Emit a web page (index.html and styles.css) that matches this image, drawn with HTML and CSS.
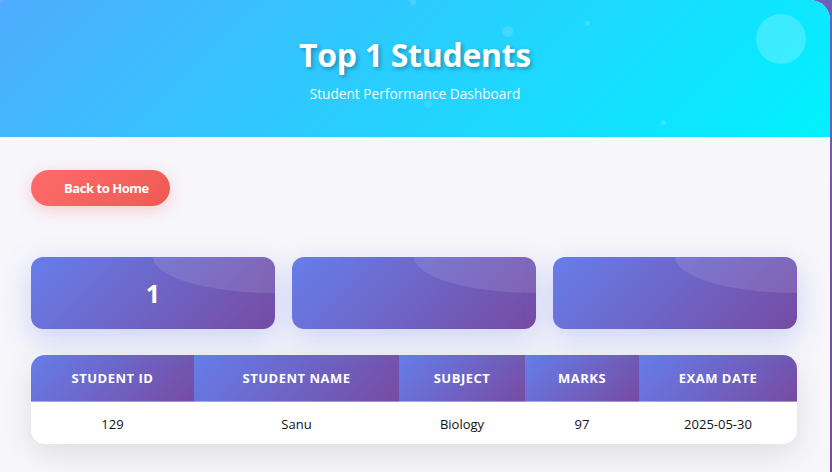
FILE: index.html
```html
<!DOCTYPE html>
<html lang="en">
<head>
<meta charset="UTF-8">
<title>Top 1 Students</title>
<link rel="stylesheet" href="styles.css">
</head>
<body>
<div class="container">
  <header class="header">
    <span class="bubble bubble-big"></span>
    <span class="bubble dot d1"></span>
    <span class="bubble dot d2"></span>
    <span class="bubble dot d3"></span>
    <span class="bubble dot d4"></span>
    <span class="bubble dot d5"></span>
    <h1 class="title">Top 1 Students</h1>
    <p class="subtitle">Student Performance Dashboard</p>
  </header>
  <main class="content">
    <div class="actions">
      <a class="btn-back" href="#">Back to Home</a>
    </div>
    <div class="stats">
      <div class="stat-card"><span class="stat-value">1</span></div>
      <div class="stat-card"></div>
      <div class="stat-card"></div>
    </div>
    <div class="table-wrap">
      <table class="students">
        <thead>
          <tr>
            <th class="c1">Student ID</th>
            <th class="c2">Student Name</th>
            <th class="c3">Subject</th>
            <th class="c4">Marks</th>
            <th class="c5">Exam Date</th>
          </tr>
        </thead>
        <tbody>
          <tr>
            <td>129</td>
            <td>Sanu</td>
            <td>Biology</td>
            <td>97</td>
            <td>2025-05-30</td>
          </tr>
        </tbody>
      </table>
    </div>
  </main>
</div>
</body>
</html>
```
FILE: styles.css
```css
html, body {
  margin: 0;
  padding: 0;
}
body {
  height: 472px;
  overflow: hidden;
  background: linear-gradient(135deg, #667eea 0%, #764ba2 100%);
  font-family: "Open Sans", "Noto Sans", sans-serif;
}
.container {
  width: 830px;
  height: 490px;
  background: #f7f6fb;
  border-radius: 3px 20px 20px 0;
  overflow: hidden;
}
.header {
  position: relative;
  height: 137px;
  box-sizing: border-box;
  padding-top: 34px;
  background: linear-gradient(135deg, #4facfe 0%, #00f2fe 100%);
  color: #fff;
  text-align: center;
  overflow: hidden;
}
.title {
  margin: 0;
  font-size: 32px;
  font-weight: 700;
  line-height: 42px;
  letter-spacing: -0.3px;
  text-shadow: 2px 2px 4px rgba(0, 0, 0, 0.3);
}
.subtitle {
  margin: 8px 0 0;
  font-size: 13.7px;
  line-height: 20px;
  opacity: 0.95;
}
.bubble {
  position: absolute;
  border-radius: 50%;
  background: rgba(255, 255, 255, 0.2);
}
.bubble-big { left: 756px; top: 14px; width: 50px; height: 50px; }
.dot { width: 6px; height: 6px; background: rgba(255, 255, 255, 0.15); }
.d1 { left: 410px; top: -1px; }
.d2 { left: 502px; top: 26px; width: 11px; height: 11px; }
.d3 { left: 585px; top: 21px; width: 5px; height: 5px; }
.d4 { left: 661px; top: 120px; width: 5px; height: 5px; }
.d5 { left: 424px; top: 100px; width: 8px; height: 8px; background: rgba(255,255,255,0.08); }

.content {
  padding: 33px 33px 0 31px;
}
.actions {
  display: flex;
}
.btn-back {
  display: inline-block;
  height: 36px;
  line-height: 37px;
  padding: 0 21px 0 33px;
  border-radius: 25px;
  background: linear-gradient(135deg, #ff6b6b 0%, #ee5a52 100%);
  color: #fff;
  font-size: 13px;
  font-weight: 700;
  letter-spacing: -0.45px;
  text-decoration: none;
  box-shadow: 0 4px 15px rgba(255, 107, 107, 0.3);
}
.stats {
  display: grid;
  grid-template-columns: repeat(3, 244px);
  gap: 17px;
  margin-top: 51px;
}
.stat-card {
  position: relative;
  height: 72px;
  border-radius: 12px;
  overflow: hidden;
  background: linear-gradient(135deg, #667eea 0%, #764ba2 100%);
  box-shadow: 0 10px 30px rgba(102, 126, 234, 0.3);
  display: flex;
  align-items: center;
  justify-content: center;
  color: #fff;
}
.stat-card::before {
  content: "";
  position: absolute;
  top: -50%;
  right: -50%;
  width: 100%;
  height: 100%;
  border-radius: 50%;
  background: rgba(255, 255, 255, 0.1);
}
.stat-value {
  position: relative;
  font-size: 25px;
  font-weight: 700;
}
.table-wrap {
  margin-top: 26px;
  width: 766px;
  border-radius: 14px;
  overflow: hidden;
  background: #fff;
  box-shadow: 0 10px 30px rgba(0, 0, 0, 0.1);
}
.students {
  width: 100%;
  border-collapse: collapse;
  table-layout: fixed;
}
.students th {
  height: 47px;
  padding: 0;
  box-sizing: border-box;
  background: linear-gradient(135deg, #667eea 0%, #764ba2 100%);
  border-bottom: 2px solid rgba(255, 255, 255, 0.2);
  color: #fff;
  font-size: 13px;
  font-weight: 700;
  text-transform: uppercase;
  letter-spacing: 0.5px;
  text-align: center;
}
.c1 { width: 163px; }
.c2 { width: 205px; }
.c3 { width: 126px; }
.c4 { width: 114px; }
.c5 { width: 158px; }
.students td {
  height: 41px;
  padding: 0;
  text-align: center;
  font-size: 13px;
  color: #111;
}
```
